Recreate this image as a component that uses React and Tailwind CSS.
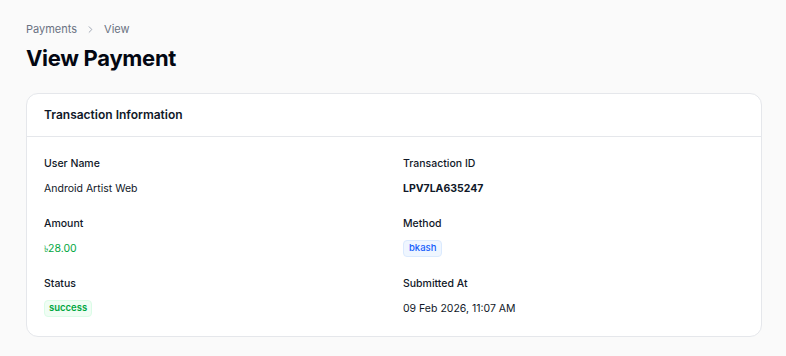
import { ChevronRight } from "lucide-react";

const fields = [
  { label: "User Name", value: "Android Artist Web", kind: "text" },
  { label: "Transaction ID", value: "LPV7LA635247", kind: "bold" },
  { label: "Amount", value: "28.00", kind: "amount" },
  { label: "Method", value: "bkash", kind: "method" },
  { label: "Status", value: "success", kind: "status" },
  { label: "Submitted At", value: "09 Feb 2026, 11:07 AM", kind: "text" },
];

function Value({ field }) {
  if (field.kind === "bold") {
    return <div className="text-[10.5px] font-bold text-gray-900">{field.value}</div>;
  }
  if (field.kind === "amount") {
    return (
      <div className="text-[10.5px] text-green-600">
        <span className="font-['DejaVu_Sans',sans-serif] text-[9px]">৳</span>
        {field.value}
      </div>
    );
  }
  if (field.kind === "method") {
    return (
      <span className="inline-flex h-[17px] items-center rounded-[4px] border border-blue-100 bg-blue-50 px-[5px] text-[9.5px] font-medium text-blue-600">
        {field.value}
      </span>
    );
  }
  if (field.kind === "status") {
    return (
      <span className="inline-flex h-[17px] items-center rounded-[4px] border border-green-100 bg-green-50 px-[4px] text-[9.5px] font-semibold text-green-600">
        {field.value}
      </span>
    );
  }
  return <div className="text-[10.5px] text-gray-900">{field.value}</div>;
}

export default function App() {
  return (
    <div className="min-h-[356px] bg-[#fafafa] pl-[26px] pr-[24px] pt-[21px] pb-[20px] font-['Inter',sans-serif]">
      <div className="flex h-[16px] items-center text-[11px] text-gray-500">
        <span>Payments</span>
        <ChevronRight size={11} className="mx-[8px] text-gray-400" strokeWidth={2} />
        <span>View</span>
      </div>
      <h1 className="mt-[7px] text-[22px] font-bold leading-[28px] tracking-[-0.3px] text-gray-950">View Payment</h1>

      <div className="mt-[21px] rounded-[12px] border border-gray-200 bg-white">
        <div className="flex h-[43px] items-center border-b border-gray-200 px-[17px]">
          <h2 className="text-[12px] font-semibold text-gray-900">Transaction Information</h2>
        </div>
        <div className="grid grid-cols-2 gap-x-[18px] gap-y-[17px] px-[17px] pt-[18px] pb-[18px]">
          {fields.map((f) => (
            <div key={f.label} className="flex h-[43px] flex-col">
              <div className="flex h-[17px] items-center text-[10.5px] font-medium text-gray-900">{f.label}</div>
              <div className="mt-[8px] flex h-[17px] items-center">
                <Value field={f} />
              </div>
            </div>
          ))}
        </div>
      </div>
    </div>
  );
}
